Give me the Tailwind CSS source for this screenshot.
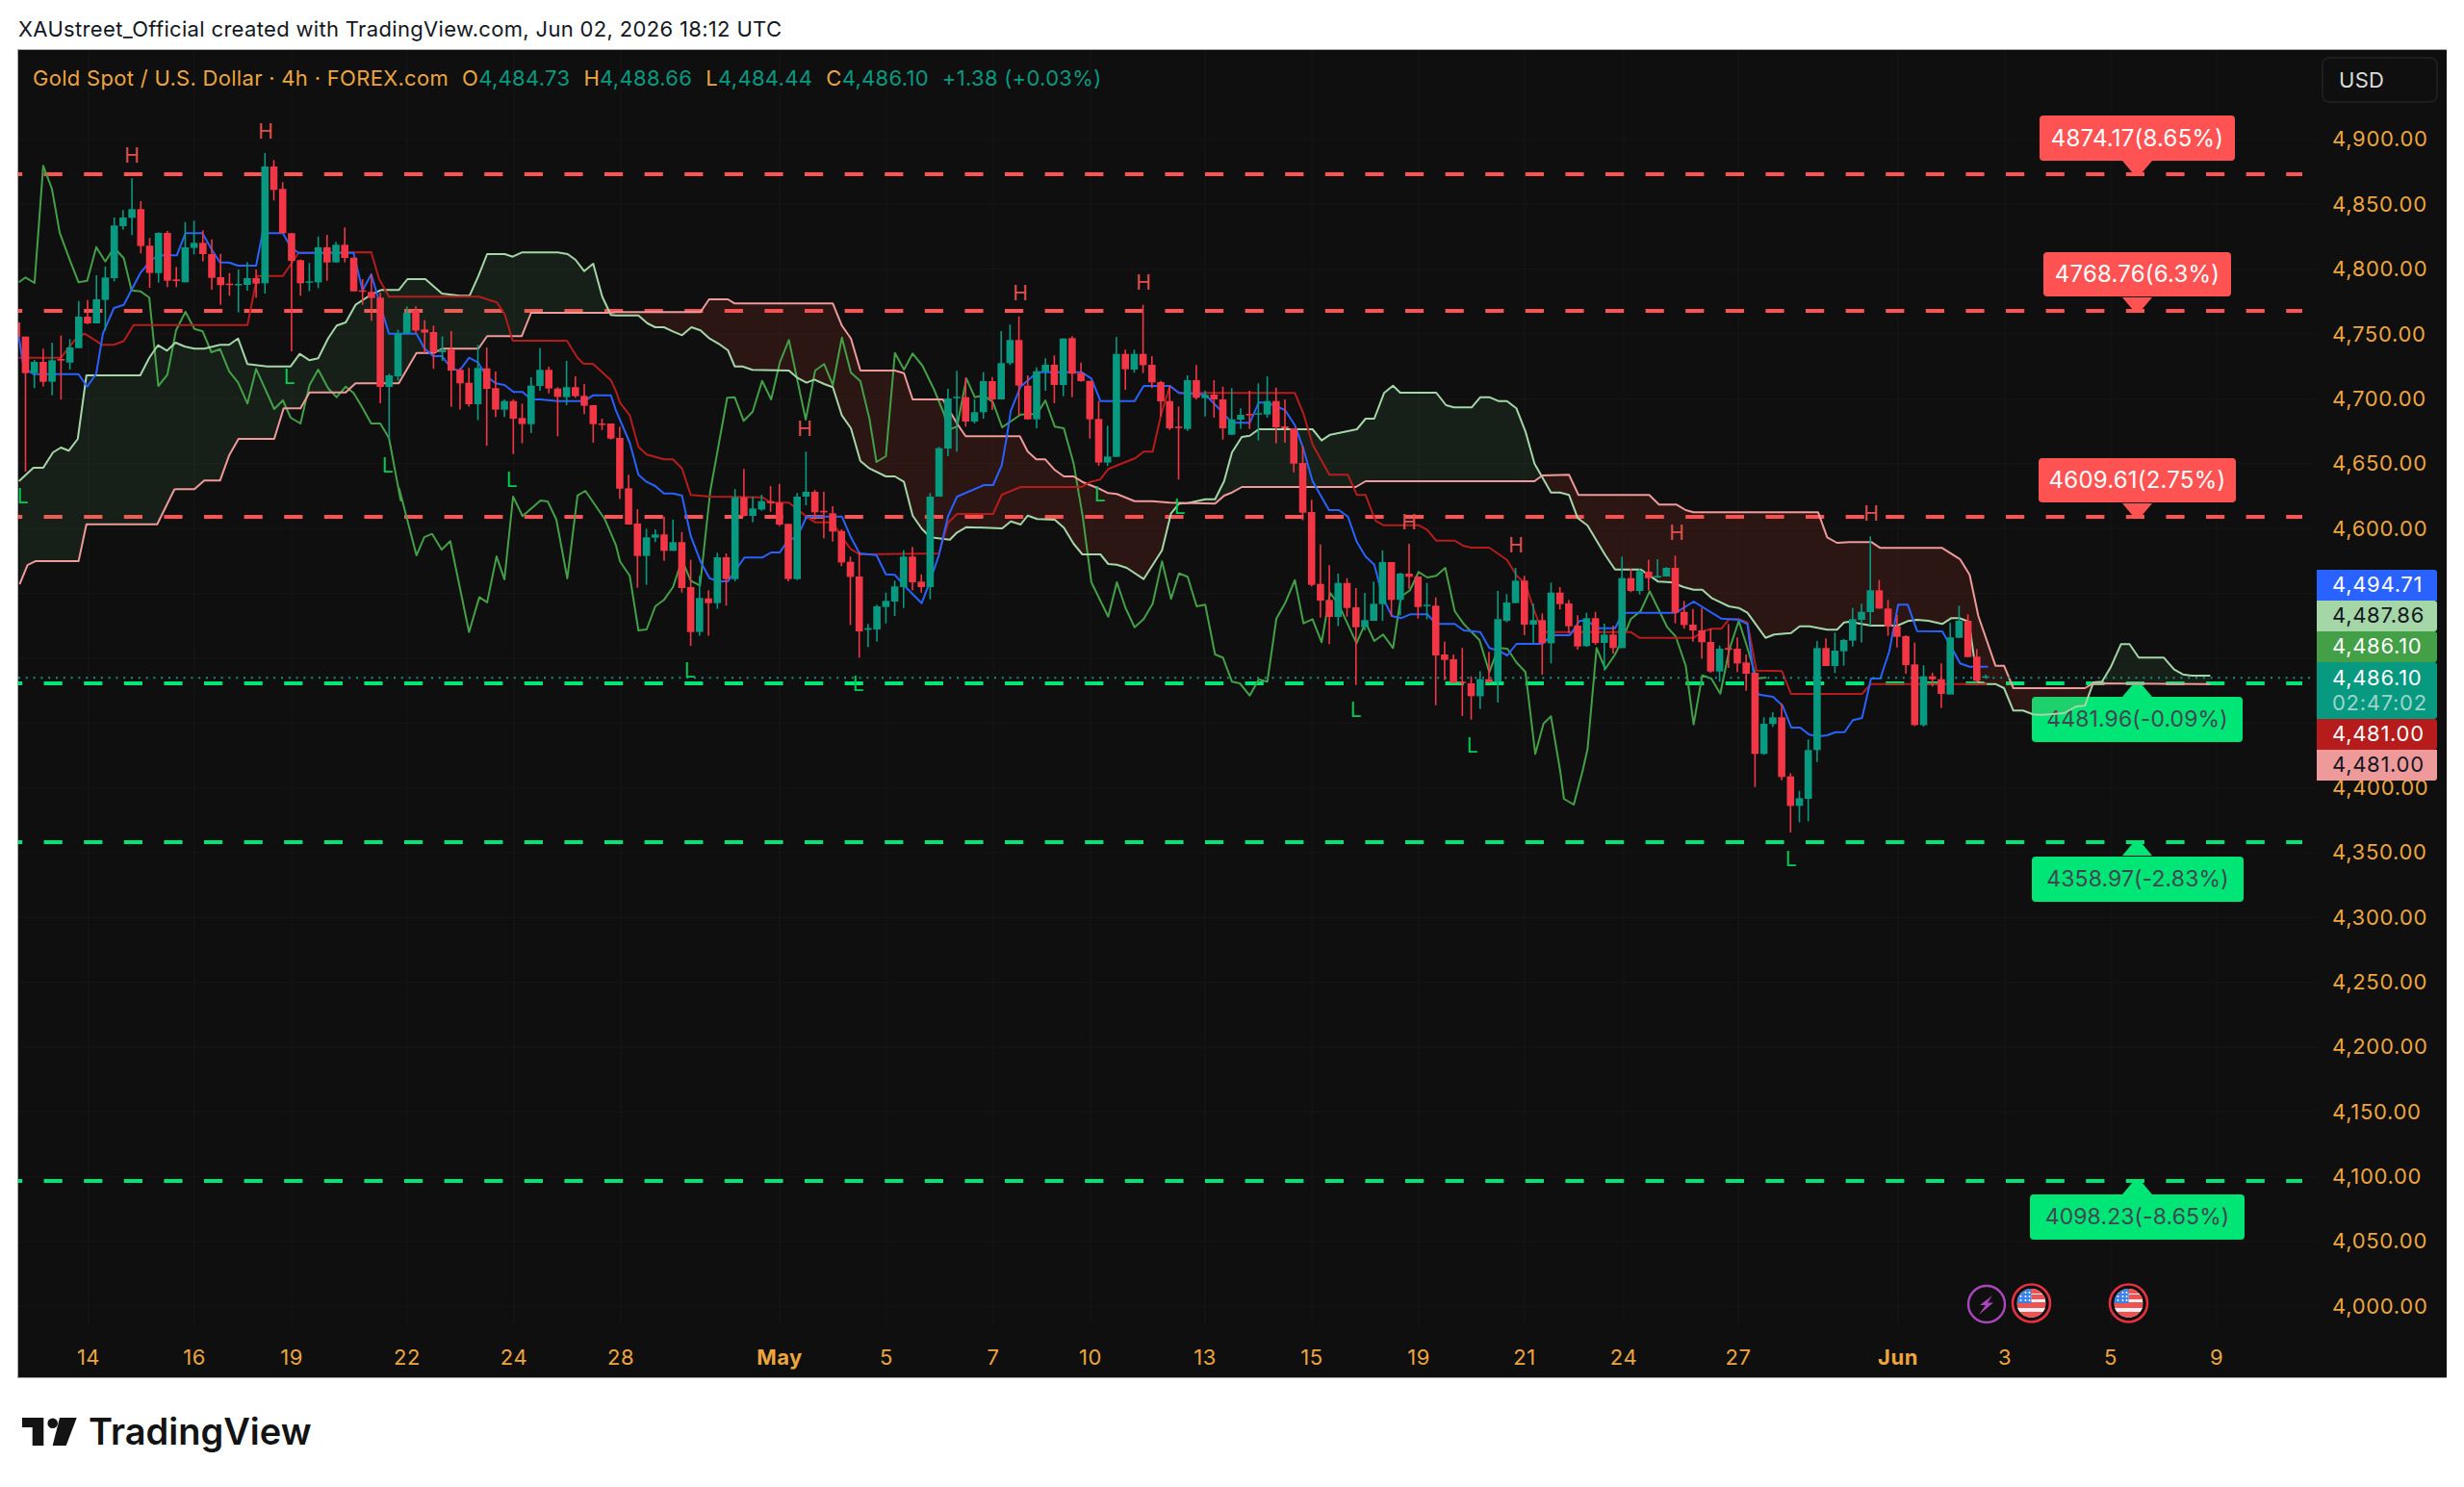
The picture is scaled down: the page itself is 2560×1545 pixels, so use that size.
<!doctype html>
<html lang="en">
  <head>
    <meta charset="UTF-8" />
    <title>XAUUSD 4h</title>
    <script src="https://cdn.jsdelivr.net/npm/@tailwindcss/browser@4"></script>
  </head>
  <body class="bg-white w-[2560px] h-[1545px] overflow-hidden font-['Inter',sans-serif] text-[#131722]">
    <header class="h-[51px] pl-[19px] pt-[9px] flex items-center text-[22px] tracking-[0.33px]">
      XAUstreet_Official created with TradingView.com, Jun 02, 2026 18:12 UTC
    </header>

    <main class="ml-[18px] w-[2524px] h-[1381px] border border-[#a8a8a8] border-r-0 bg-[#0f0f0f] flex overflow-hidden">
      <!-- plot area: 2388 wide, svg coords are page px -->
      <section class="relative w-[2388px] flex flex-col">
        <svg id="under" class="absolute left-0 top-0" width="2388" height="1379" viewBox="19 52 2388 1379"></svg>

        <div class="absolute left-[2100px] top-[68px] w-[203px] h-[47px] rounded bg-[#ff5252] text-white text-[24px] tracking-[0.2px] flex items-center justify-center">4874.17(8.65%)</div>
        <div class="absolute left-[2104px] top-[210px] w-[195px] h-[46px] rounded bg-[#ff5252] text-white text-[24px] tracking-[0.2px] flex items-center justify-center">4768.76(6.3%)</div>
        <div class="absolute left-[2099px] top-[424px] w-[205px] h-[46px] rounded bg-[#ff5252] text-white text-[24px] tracking-[0.2px] flex items-center justify-center">4609.61(2.75%)</div>
        <div class="absolute left-[2092px] top-[672px] w-[219px] h-[47px] rounded bg-[#00e676] text-[#434651] text-[23px] tracking-[0.1px] flex items-center justify-center">4481.96(-0.09%)</div>
        <div class="absolute left-[2092px] top-[838px] w-[220px] h-[47px] rounded bg-[#00e676] text-[#434651] text-[23px] tracking-[0.1px] flex items-center justify-center">4358.97(-2.83%)</div>
        <div class="absolute left-[2090px] top-[1189px] w-[223px] h-[47px] rounded bg-[#00e676] text-[#434651] text-[23px] tracking-[0.1px] flex items-center justify-center">4098.23(-8.65%)</div>

        <svg id="over" class="absolute left-0 top-0" width="2388" height="1379" viewBox="19 52 2388 1379">
          <g id="series"></g>
          <g class="fill-[#e04f4f] text-[21px]" text-anchor="middle" dominant-baseline="central">
            <text x="137" y="161">H</text><text x="276" y="136">H</text><text x="1060" y="304">H</text>
            <text x="1188" y="293">H</text><text x="836" y="445">H</text><text x="1464" y="542">H</text>
            <text x="1575" y="566">H</text><text x="1742" y="553">H</text><text x="1944" y="533">H</text>
          </g>
          <g class="fill-[#00c853] text-[21px]" text-anchor="middle" dominant-baseline="central">
            <text x="24" y="515">L</text><text x="301" y="391">L</text><text x="403" y="483">L</text>
            <text x="532" y="498">L</text><text x="717" y="696">L</text><text x="892" y="710">L</text>
            <text x="1143" y="513">L</text><text x="1226" y="526">L</text><text x="1409" y="737">L</text>
            <text x="1530" y="774">L</text><text x="1861" y="892">L</text>
          </g>
          <!-- calendar events -->
          <defs>
            <clipPath id="flag-a"><circle cx="2110.5" cy="1354" r="15" /></clipPath>
            <clipPath id="flag-b"><circle cx="2211.5" cy="1354" r="15" /></clipPath>
            <g id="flag">
              <rect x="-15" y="-15" width="30" height="30" fill="#f0f0f4" />
              <rect x="-15" y="-15" width="30" height="5" fill="#ef5350" />
              <rect x="0" y="-9" width="15" height="5" fill="#ef5350" />
              <rect x="-15" y="5" width="30" height="4" fill="#f0f0f4" />
              <rect x="-15" y="-1" width="30" height="6" fill="#ef5350" />
              <rect x="-15" y="9" width="30" height="6" fill="#ef5350" />
              <rect x="-15" y="-15" width="15" height="15" fill="#3b82e8" />
              <g fill="#fff">
                <circle cx="-11" cy="-11" r="1" /><circle cx="-6" cy="-11" r="1" /><circle cx="-2" cy="-11" r="1" />
                <circle cx="-11" cy="-7" r="1" /><circle cx="-6" cy="-7" r="1" /><circle cx="-2" cy="-7" r="1" />
                <circle cx="-11" cy="-3" r="1" /><circle cx="-6" cy="-3" r="1" /><circle cx="-2" cy="-3" r="1" />
              </g>
            </g>
          </defs>
          <circle cx="2064" cy="1355" r="19" fill="#0f0f0f" stroke="#ab47bc" stroke-width="2.4" />
          <path d="M2070 1346 L2057 1356 L2063 1356 L2056 1366 L2071 1353.5 L2065 1353.5 Z" fill="#ab47bc" />
          <circle cx="2110.5" cy="1354" r="19.5" fill="#0f0f0f" stroke="#e5303f" stroke-width="2.6" />
          <g clip-path="url(#flag-a)"><use href="#flag" x="2110.5" y="1354" /></g>
          <circle cx="2211.5" cy="1354" r="19.5" fill="#0f0f0f" stroke="#e5303f" stroke-width="2.6" />
          <g clip-path="url(#flag-b)"><use href="#flag" x="2211.5" y="1354" /></g>
        </svg>

        <div class="relative h-[58px] pl-[15px] flex items-center gap-[14px] text-[22px] text-[#eca53f] tracking-[0.3px]">
          <span>Gold Spot / U.S. Dollar · 4h · FOREX.com</span>
          <span>O<span class="text-[#089981]">4,484.73</span></span>
          <span>H<span class="text-[#089981]">4,488.66</span></span>
          <span>L<span class="text-[#089981]">4,484.44</span></span>
          <span>C<span class="text-[#089981]">4,486.10</span></span>
          <span class="text-[#089981]">+1.38 (+0.03%)</span>
        </div>

        <div class="relative mt-auto h-[54px] text-[22px] tracking-[0.5px] text-[#eca53f]">
          <span class="absolute left-[73px] top-[17px] -translate-x-1/2">14</span>
          <span class="absolute left-[183px] top-[17px] -translate-x-1/2">16</span>
          <span class="absolute left-[284px] top-[17px] -translate-x-1/2">19</span>
          <span class="absolute left-[404px] top-[17px] -translate-x-1/2">22</span>
          <span class="absolute left-[515px] top-[17px] -translate-x-1/2">24</span>
          <span class="absolute left-[626px] top-[17px] -translate-x-1/2">28</span>
          <span class="absolute left-[791px] top-[17px] -translate-x-1/2 font-bold">May</span>
          <span class="absolute left-[902px] top-[17px] -translate-x-1/2">5</span>
          <span class="absolute left-[1013px] top-[17px] -translate-x-1/2">7</span>
          <span class="absolute left-[1114px] top-[17px] -translate-x-1/2">10</span>
          <span class="absolute left-[1233px] top-[17px] -translate-x-1/2">13</span>
          <span class="absolute left-[1344px] top-[17px] -translate-x-1/2">15</span>
          <span class="absolute left-[1455px] top-[17px] -translate-x-1/2">19</span>
          <span class="absolute left-[1565px] top-[17px] -translate-x-1/2">21</span>
          <span class="absolute left-[1668px] top-[17px] -translate-x-1/2">24</span>
          <span class="absolute left-[1787px] top-[17px] -translate-x-1/2">27</span>
          <span class="absolute left-[1953px] top-[17px] -translate-x-1/2 font-bold">Jun</span>
          <span class="absolute left-[2064px] top-[17px] -translate-x-1/2">3</span>
          <span class="absolute left-[2174px] top-[17px] -translate-x-1/2">5</span>
          <span class="absolute left-[2284px] top-[17px] -translate-x-1/2">9</span>
        </div>
      </section>

      <!-- price axis; the ticks behind the price tags are not visible in the picture -->
      <aside class="relative w-[134px] pt-[59.3px] pl-[16px] text-[22px] tracking-[0.7px] text-[#eca53f]">
        <div class="h-[67.35px] flex items-center">4,900.00</div>
        <div class="h-[67.35px] flex items-center">4,850.00</div>
        <div class="h-[67.35px] flex items-center">4,800.00</div>
        <div class="h-[67.35px] flex items-center">4,750.00</div>
        <div class="h-[67.35px] flex items-center">4,700.00</div>
        <div class="h-[67.35px] flex items-center">4,650.00</div>
        <div class="h-[67.35px] flex items-center">4,600.00</div>
        <div class="h-[202.05px]"></div>
        <div class="h-[67.35px] flex items-center">4,400.00</div>
        <div class="h-[67.35px] flex items-center">4,350.00</div>
        <div class="h-[67.35px] flex items-center">4,300.00</div>
        <div class="h-[67.35px] flex items-center">4,250.00</div>
        <div class="h-[67.35px] flex items-center">4,200.00</div>
        <div class="h-[67.35px] flex items-center">4,150.00</div>
        <div class="h-[67.35px] flex items-center">4,100.00</div>
        <div class="h-[67.35px] flex items-center">4,050.00</div>
        <div class="h-[67.35px] flex items-center">4,000.00</div>

        <div class="absolute left-[5px] top-[7px] w-[121px] h-[48px] rounded-lg border-2 border-[#1e1e1e] bg-[#0f0f0f] pl-[16px] flex items-center text-[22px] tracking-[0.3px] text-[#dbdbdb]">USD</div>

        <div class="absolute left-0 top-[540px] w-[125px] flex flex-col">
          <div class="h-[32px] pl-[16px] pb-[2px] flex items-center rounded-tr-[3px] bg-[#2962ff] text-white">4,494.71</div>
          <div class="h-[32px] pl-[16px] pb-[2px] flex items-center rounded-r-[3px] bg-[#a5d6a7] text-[#131722]">4,487.86</div>
          <div class="h-[32px] pl-[16px] pb-[2px] flex items-center rounded-r-[3px] bg-[#43a047] text-white">4,486.10</div>
          <div class="h-[59px] pl-[16px] pb-[2px] flex flex-col justify-center rounded-r-[3px] bg-[#089981] text-white leading-[26px]">
            <span>4,486.10</span>
            <span class="text-white/60">02:47:02</span>
          </div>
          <div class="h-[32px] pl-[16px] pb-[2px] flex items-center rounded-r-[3px] bg-[#b71c1c] text-white">4,481.00</div>
          <div class="h-[32px] pl-[16px] pb-[2px] flex items-center rounded-br-[3px] bg-[#ef9a9a] text-[#131722]">4,481.00</div>
        </div>
      </aside>
    </main>

    <footer class="ml-[23px] mt-[41px] flex items-center gap-[12px] h-[29px]">
      <svg width="57" height="29" viewBox="0 0 57 29" fill="#131313">
        <path d="M0 0H22.3V29H10.7V10H0Z" />
        <circle cx="31.7" cy="5.7" r="5.3" />
        <path d="M39 0H56.7L45.7 29H31.7Z" />
      </svg>
      <span class="text-[38px] font-semibold text-[#131313] leading-none -mt-[2px]">TradingView</span>
    </footer>

    <script>
      // zoom views the coordinates were read from: [x0, y0, scaleX, scaleY]
      const V = {
        a: [0, 120, 2.45, 3],
        b: [640, 280, 2.45, 3],
        c: [1280, 380, 2.45, 3],
        d: [1800, 520, 2.8, 3],
        o: [0, 0, 1.225, 2.01],
      };
      const toPts = (parts) =>
        parts.flatMap(([v, s]) =>
          s.split(' ').map((p) => {
            const [x, y] = p.split(',').map(Number);
            return [V[v][0] + x / V[v][2], V[v][1] + y / V[v][3]];
          })
        );
      const str = (pts) => pts.map((p) => p[0].toFixed(1) + ',' + p[1].toFixed(1)).join(' ');

      const tenkan = toPts([
        ['a', '48,690 60,785 85,806 200,806 222,845 245,805 262,680 290,600 315,590 358,490 385,450 405,436 450,436 472,367 515,367 540,420 560,458 583,458 606,468 652,468 668,367 720,367 740,410 760,428 900,428 923,545 945,495 968,590 990,680 1060,680 1080,725 1103,750 1125,750 1150,790 1170,795 1194,755 1217,770 1240,815 1262,835 1284,840 1307,862 1330,862 1352,885 1375,885 1420,890 1488,890 1510,872 1555,872'],
        ['b', '0,440 35,540 57,640 78,662 100,675 122,698 145,698 168,705 190,830 215,910 238,962 260,972 285,972 327,898 372,898 395,882 417,882 440,840 460,838 485,770 575,770 598,835 620,885 663,890 687,950 710,952 733,985 778,1040 800,970 822,890 845,770 868,708 937,672 960,672 982,610 995,520 1005,440 1030,365 1072,320 1185,320 1210,340 1233,410 1320,410 1343,363 1410,363 1433,385 1500,390 1540,440'],
        ['c', '0,178 45,178 68,115 90,115 135,138 160,185 182,260 205,360 247,450 272,450 295,470 318,550 340,595 362,620 385,725 407,780 430,787 453,775 497,775 520,805 567,805 590,825 632,830 655,880 678,888 701,903 724,867 790,867 814,840 860,840 885,795 905,795 930,818 975,818 995,770 1130,770 1175,735 1245,788 1290,792 1312,805'],
        ['d', '67,590 78,605 118,612 146,640 171,708 197,708 223,730 250,735 275,732 300,722 326,722 350,685 377,678 403,555 430,555 456,470 482,325 510,325 537,407 610,408 636,455 662,508 690,518 743,518'],
      ]);
      const kijun = toPts([
        ['a', '48,755 155,755 190,700 215,680 235,695 260,715 290,715 315,703 340,653 630,653 655,500 720,500 760,428 945,426 965,510 990,565 1220,565 1265,583 1285,620 1305,702 1443,702 1470,755 1485,773 1510,775 1555,825'],
        ['b', '0,380 10,415 35,455 57,553 78,577 122,592 145,592 168,620 190,703 240,708 372,710 395,727 440,727 485,770 507,788 552,788 575,835 598,872 620,888 822,885 845,790 868,762 960,762 982,702 1030,678 1185,678 1207,662 1232,655 1253,622 1322,588 1343,568 1366,568 1388,450 1410,363 1433,385 1568,385'],
        ['c', '0,85 160,85 182,150 205,245 248,340 295,340 318,403 340,403 365,483 385,497 475,497 497,512 520,545 567,545 590,562 610,567 655,567 700,605 725,655 747,680 770,765 790,830 1015,830 1037,848 1175,848 1200,827 1222,820 1245,820 1265,790 1290,790 1312,800 1335,950 1400,952 1423,1023'],
        ['d', '377,603 403,572 740,572'],
      ]);
      const chikou = toPts([
        ['a', '48,520 65,505 88,522 110,157 132,228 152,365 178,452 200,520 222,515 245,410 268,455 290,412 315,445 335,545 358,548 380,568 403,843 426,808 448,670 472,612 495,665 516,673 538,738 560,728 583,797 606,832 630,898 652,790 698,915 720,888 740,942 765,960 788,840 810,792 835,850 857,878 880,845 900,865 920,905 945,960 968,960 990,1005 1020,1200'],
        ['o', '508,1020 530,1160 540,1122 550,1115 562,1148 573,1130 597,1320 610,1247 620,1258 632,1162 642,1210 653,1037 665,1078 688,1045 697,1047 708,1085 722,1208 735,1035 745,1025 770,1085'],
        ['b', '0,860 10,910 35,955 57,1125 78,1122 100,1050 122,1030 145,990 168,905 190,970 214,985 240,690 283,400 302,398 325,472 348,443 372,347 395,405 417,290 440,220 483,468 507,315 530,295 552,360 575,212 598,322 622,348 645,465 663,600 687,582 710,260 733,312 755,262 780,300 810,375 835,450 845,500 868,490 892,340 913,398 936,392 960,415 983,492 1030,452 1072,450 1093,408 1117,490 1140,495 1165,605 1188,770 1210,975 1253,1082 1275,975 1297,1055 1320,1115 1343,1090 1366,1042 1390,910 1413,1027 1433,947 1455,958 1478,1050 1500,1045 1525,1200 1545,1210'],
        ['c', '0,985 20,990 45,1028 68,978 90,985 113,788 136,738 160,668 182,803 205,790 228,862 250,708 272,745 317,865 340,800 362,858 385,838 410,880 430,720 453,700 475,643 497,660 520,655 543,630 567,765 590,805 630,855 655,955 678,880 701,882 724,925 747,955 772,1210 793,1115 812,1093 835,1260 845,1350 870,1368 893,1260 905,1195 928,880 950,945 975,900 995,850 1015,790 1040,765 1063,703 1108,815 1130,845 1155,935 1175,1118 1197,965 1220,975 1243,1022 1266,885 1290,795 1312,880 1335,975 1360,972'],
      ]);
      const spanA = toPts([
        ['a', '48,1140 85,1098 110,1098 135,1050 155,1035 175,1045 198,1008 220,810 357,810 380,755 402,716 425,733 447,708 470,720 495,727 520,727 560,715 583,715 606,695 630,775 680,782 740,782 763,743 788,763 810,757 835,695 857,655 880,645 905,590 945,558 970,544 1015,544 1037,510 1083,510 1125,555 1170,562 1195,562 1218,500 1240,432 1285,432 1305,440 1328,427 1420,427 1445,432 1465,450 1487,485 1510,462 1533,565 1555,622'],
        ['b', '0,143 57,143 80,168 100,180 122,180 145,193 168,205 192,180 215,190 238,215 262,232 285,252 302,302 322,302 347,313 440,315 462,338 485,353 505,343 530,357 552,367 575,455 598,495 622,597 645,620 687,645 710,645 733,662 755,767 778,808 800,835 850,842 868,820 892,803 983,807 1005,785 1030,795 1048,767 1072,778 1117,780 1140,805 1165,855 1187,888 1233,888 1253,918 1275,920 1300,930 1343,965 1390,875 1413,760 1433,730 1455,728 1500,716 1525,716 1548,660 1568,570'],
        ['c', '25,222 45,218 68,198 205,198 228,233 250,215 318,198 340,165 362,165 387,85 410,62 428,84 520,84 545,123 565,130 610,130 632,98 655,98 678,110 700,110 724,133 747,205 770,305 812,395 835,395 858,403 880,475 905,498 950,590 975,635 1040,635 1085,673 1118,675 1150,690 1175,698 1197,698 1222,725 1265,750 1290,755 1312,770 1358,848 1380,838 1423,833 1445,812 1470,812 1515,823 1540,823 1558,800'],
        ['d', '340,378 403,390 480,390 510,376 537,372 570,375 610,385 636,367 660,367 688,378 700,470 713,567 740,572 765,572 790,585 817,655 845,655 875,667 900,668 965,663 1000,642 1025,640 1050,567 1075,565 1100,520 1130,448 1155,448 1182,490 1255,490 1285,527 1310,542 1335,546 1390,546'],
      ]);
      const spanB = toPts([
        ['o', '25,1220 35,1180 45,1172 100,1172 110,1095 200,1095 222,1022'],
        ['a', '450,1165 495,1165 520,1138 560,1138 583,1060 607,1008 698,1008 722,913 765,913 788,863 880,863 905,835 1015,835 1060,740 1105,740 1125,727 1218,727 1240,688 1328,688 1352,615 1555,615'],
        ['b', '0,133 215,133 237,93 285,93 302,106 552,106 575,175 598,215 622,315 710,315 733,323 755,405 832,405 868,480 890,520 1028,520 1048,568 1070,592 1093,592 1117,625 1140,645 1165,645 1187,662 1233,685 1253,697 1275,700 1320,722 1365,722 1410,727 1525,730 1548,705 1568,695'],
        ['c', '25,378 315,378 340,360 770,360 790,342 858,340 882,403 1062,403 1087,433 1132,433 1155,450 1175,457 1492,457 1515,535 1540,552'],
        ['d', '340,130 405,130 430,148 610,148 662,183 690,232 715,360 765,515 790,515 817,585 1025,585 1050,570 1390,572'],
      ]);

      // [up, bodyTop, bodyBottom, wickTop, wickBottom] in view coords
      const candles = [
        ['a', -1, [[0,645,690,640,690],[0,689,803,689,1110],[1,768,803,762,850],[0,768,830,727,845],[1,763,830,708,872],[0,759,764,686,885],[1,723,770,697,792],[1,627,725,578,725],[0,627,648,575,650],[1,573,648,498,648],[1,505,575,471,670],[1,343,507,318,517],[1,318,345,295,356],[1,292,319,196,373],[0,292,407,267,430],[0,406,491,382,537],[1,366,491,364,521],[0,366,515,360,535],[0,511,516,472,535],[1,411,520,332,520],[1,397,413,328,433],[0,397,432,358,455],[0,432,506,386,543],[0,504,529,431,590],[0,524,527,491,562],[1,525,527,480,614],[1,507,528,457,546],[0,507,524,480,568],[1,159,523,117,555],[0,159,232,139,265],[0,229,367,208,367],[0,367,453,367,735],[0,451,523,449,562],[1,517,520,460,548],[1,411,520,377,538],[0,411,458,372,515],[1,403,458,394,458],[0,403,444,349,458],[0,443,548,443,548],[0,545,548,510,590],[0,550,569,495,640],[0,568,846,553,897],[1,810,846,805,1010],[1,680,813,668,826],[1,615,680,595,680],[0,608,670,595,680],[0,667,677,638,740],[0,675,738,655,790],[1,730,738,688,765],[0,730,795,672,908],[0,793,835,787,917],[0,833,900,787,908],[1,787,900,715,950],[0,788,852,723,1030],[0,850,917,798,940],[1,890,917,885,940],[0,890,945,885,1055],[0,943,962,898,1022],[1,842,962,816,990],[1,793,843,725,858],[0,793,851,783,866],[0,851,877,847,1000],[1,847,878,765,903],[0,847,875,813,880],[0,874,905,837,931],[0,903,962,903,1020],[0,960,963,945,980],[0,960,1007,960,1010]]],
        ['b', 67, [[0,525,683,490,715],[0,682,795,640,795],[0,792,893,747,992],[1,835,893,808,983],[1,826,836,810,850],[0,826,877,770,908],[1,850,877,780,877],[0,850,993,818,1007],[0,990,1130,905,1173],[1,1024,1130,955,1142],[0,1025,1040,1000,1142],[1,897,1040,883,1058],[0,897,965,885,1048],[1,710,965,685,972],[0,710,768,622,770],[1,745,768,708,788],[1,722,748,702,752],[0,722,728,675,755],[0,727,795,668,800],[0,793,965,793,972],[1,708,965,697,968],[1,693,708,568,735],[0,693,757,687,780],[0,752,757,693,838],[0,760,817,738,848],[0,815,913,810,925],[0,911,958,895,1108],[0,957,1128,880,1210],[1,1118,1123,1105,1177],[1,1050,1122,1045,1160],[1,1033,1052,1007,1103],[1,988,1035,970,1080],[1,895,990,875,1055],[0,895,975,865,1000],[0,973,990,950,1007],[1,708,990,697,1028],[1,557,708,553,708],[1,402,558,372,582],[1,397,400,316,568],[0,398,474,337,490],[1,445,474,405,480],[1,348,445,320,465],[0,348,405,335,438],[1,292,405,192,405],[1,220,292,172,298],[0,220,362,146,455],[0,362,467,330,468],[1,317,467,305,495],[1,297,318,277,378],[0,297,360,268,417],[1,215,360,215,395],[0,214,325,208,398],[0,323,348,290,350],[0,347,467,347,527],[0,466,602,410,612],[1,583,602,487,612],[1,263,584,210,584],[0,263,311,250,375],[1,263,312,250,322],[0,263,298,110,323],[0,297,352,270,370],[0,351,411,347,458],[0,410,495,362,500],[0,490,493,427,655],[1,345,497,330,503],[0,345,400,298,405],[1,391,401,377,458],[0,390,405,345,462],[0,405,495,365,530]]],
        ['c', 136, [[1,167,215,70,215],[1,153,168,133,197],[0,150,154,78,197],[1,148,152,55,233],[1,110,152,33,162],[0,110,192,68,242],[0,189,195,105,240],[0,195,305,195,332],[0,303,458,250,482],[0,456,683,418,688],[0,680,732,557,785],[0,730,783,622,868],[1,677,783,648,812],[0,677,755,662,782],[0,753,815,693,995],[1,793,815,708,825],[1,742,795,673,795],[1,612,743,575,795],[0,612,730,612,782],[1,648,730,645,778],[0,648,658,555,695],[0,657,752,657,788],[1,745,749,677,790],[0,748,903,722,1058],[0,900,917,860,980],[0,915,988,900,990],[0,985,989,880,1092],[0,990,1030,968,1103],[1,977,1030,952,1070],[0,977,986,892,988],[1,790,985,702,1050],[1,738,795,712,800],[1,670,740,630,740],[0,670,807,655,840],[1,793,807,742,865],[0,793,865,772,963],[1,707,865,676,928],[0,707,743,690,760],[0,741,812,730,835],[0,810,875,778,885],[1,787,874,770,876],[0,787,864,767,870],[1,838,864,804,950],[0,838,880,810,898],[1,662,880,595,880],[0,662,702,633,706],[1,640,702,633,713],[0,642,662,605,700],[1,655,660,603,662],[1,630,657,628,657],[0,630,770,592,803],[0,767,808,733,820],[0,807,825,758,860],[0,825,862,755,913],[0,861,953,820,957],[1,882,953,872,985],[0,880,885,805,942],[0,882,928,847,955]]],
        ['d', 194, [[0,505,540,480,593],[0,537,790,537,893],[1,696,790,676,793],[1,676,697,660,706],[0,676,862,633,872],[0,860,952,850,1035],[1,928,952,905,1003],[1,778,930,745,1000],[1,460,778,438,815],[0,460,516,430,516],[1,468,516,412,538],[1,435,470,432,515],[1,370,437,335,455],[1,347,372,322,443],[1,280,348,112,390],[0,280,337,248,337],[0,337,393,310,422],[0,392,425,357,458],[0,423,513,420,540],[0,511,700,443,703],[1,548,700,514,705],[0,548,557,537,580],[0,557,603,508,647],[1,427,605,382,605],[1,375,428,328,428],[0,375,488,355,488],[0,487,562,463,567],[1,548,552,543,553]]],
      ];

      const grid = [];
      for (let i = 0; i < 19; i++) {
        const y = 145 + i * 67.35;
        grid.push(`<line x1="19" x2="2407" y1="${y}" y2="${y}" stroke="#141414" stroke-width="1.5" />`);
      }
      [92, 202, 303, 423, 534, 645, 810, 921, 1032, 1133, 1252, 1363, 1474, 1584, 1687, 1806, 1972, 2083, 2193, 2303].forEach((x) => {
        grid.push(`<line x1="${x}" x2="${x}" y1="52" y2="1377" stroke="#141414" stroke-width="1.5" />`);
      });

      // dashed level lines and the pointers of their labels
      const levels = [
        [181, '#ff5252', -1],
        [323, '#ff5252', -1],
        [537, '#ff5252', -1],
        [710, '#00e676', 1],
        [875, '#00e676', 1],
        [1227, '#00e676', 1],
      ];
      const dashes = levels.map(([y, c, dir]) => {
        const base = y + dir * 14;
        const tip = y + dir * 1;
        return `<line x1="4" x2="2392" y1="${y}" y2="${y}" stroke="${c}" stroke-width="4" stroke-dasharray="19.2 22.4" />
          <polygon points="2205,${base} 2216,${tip} 2225,${tip} 2236,${base}" fill="${c}" />`;
      });
      document.getElementById('under').innerHTML = grid.join('') + dashes.join('');

      const x0 = spanB[0][0];
      const x1 = spanB[spanB.length - 1][0];
      const band = str(spanA) + ' ' + str([...spanB].reverse());
      let out = `<defs>
        <clipPath id="above"><polygon points="${str(spanB)} ${x1},0 ${x0},0" /></clipPath>
        <clipPath id="below"><polygon points="${str(spanB)} ${x1},2000 ${x0},2000" /></clipPath>
      </defs>
      <polygon points="${band}" fill="rgb(95,185,105)" fill-opacity="0.1" clip-path="url(#above)" />
      <polygon points="${band}" fill="rgb(240,70,55)" fill-opacity="0.13" clip-path="url(#below)" />`;

      const line = (pts, c) =>
        `<polyline points="${str(pts)}" fill="none" stroke="${c}" stroke-width="2" stroke-linejoin="round" />`;
      out += line(chikou, '#43a047') + line(spanA, '#a5d6a7') + line(spanB, '#ef9a9a') + line(kijun, '#b71c1c') + line(tenkan, '#2962ff');

      // dotted last price line
      out += `<line x1="19" x2="2402" y1="704.3" y2="704.3" stroke="#089981" stroke-width="2" stroke-dasharray="2 5.8" />`;

      for (const [v, start, rows] of candles) {
        const [, y0, , sy] = V[v];
        rows.forEach((r, i) => {
          const x = 26.5 + 9.215 * (start + i);
          const c = r[0] ? '#089981' : '#f23645';
          const top = y0 + r[1] / sy;
          const h = Math.max((r[2] - r[1]) / sy, 1.5);
          out += `<rect x="${(x - 0.8).toFixed(1)}" y="${(y0 + r[3] / sy).toFixed(1)}" width="1.6" height="${((r[4] - r[3]) / sy).toFixed(1)}" fill="${c}" />`;
          out += `<rect x="${(x - 3.8).toFixed(1)}" y="${top.toFixed(1)}" width="7.6" height="${h.toFixed(1)}" fill="${c}" />`;
        });
      }
      document.getElementById('series').innerHTML = out;
    </script>
  </body>
</html>
